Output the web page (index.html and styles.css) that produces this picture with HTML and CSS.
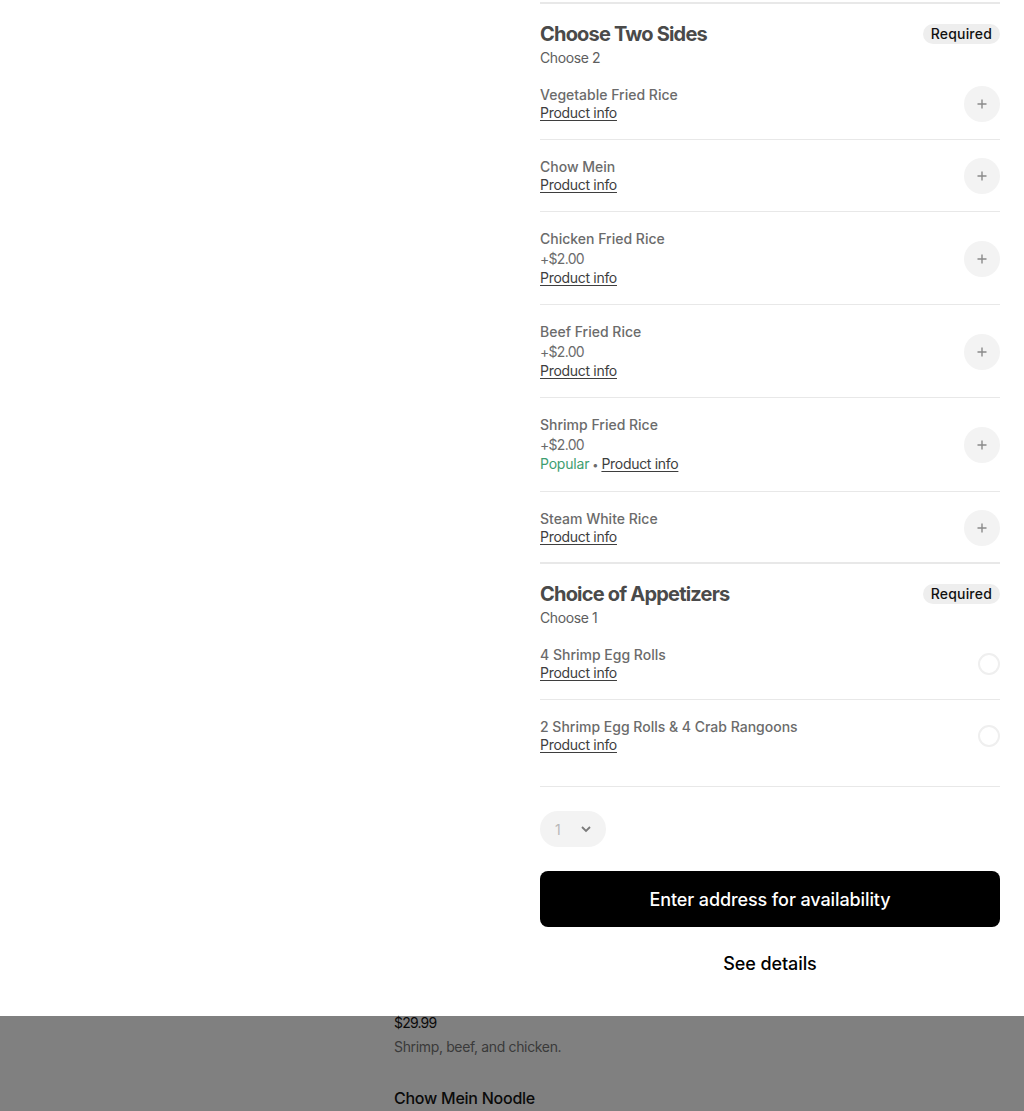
FILE: index.html
```html
<!DOCTYPE html>
<html lang="en">
<head>
<meta charset="utf-8">
<title>Item options</title>
<link rel="stylesheet" href="styles.css">
</head>
<body>
<div class="modal">
  <div class="panel">
    <section class="group first">
      <div class="group-head">
        <div class="group-titles">
          <h2 class="group-title">Choose Two Sides</h2>
          <div class="group-sub">Choose 2</div>
        </div>
        <span class="pill">Required</span>
      </div>
      <ul class="options">
        <li class="option">
          <div class="opt-text">
            <div class="opt-name">Vegetable Fried Rice</div>
            <div class="opt-meta"><a class="info">Product info</a></div>
          </div>
          <button class="add" aria-label="Add"><svg viewBox="0 0 12 12" width="12" height="12"><path d="M6 1.5v9M1.5 6h9" stroke="#8a8a8a" stroke-width="1.4" fill="none"/></svg></button>
        </li>
        <li class="option">
          <div class="opt-text">
            <div class="opt-name">Chow Mein</div>
            <div class="opt-meta"><a class="info">Product info</a></div>
          </div>
          <button class="add" aria-label="Add"><svg viewBox="0 0 12 12" width="12" height="12"><path d="M6 1.5v9M1.5 6h9" stroke="#8a8a8a" stroke-width="1.4" fill="none"/></svg></button>
        </li>
        <li class="option">
          <div class="opt-text">
            <div class="opt-name">Chicken Fried Rice</div>
            <div class="opt-price">+$2.00</div>
            <div class="opt-meta"><a class="info">Product info</a></div>
          </div>
          <button class="add" aria-label="Add"><svg viewBox="0 0 12 12" width="12" height="12"><path d="M6 1.5v9M1.5 6h9" stroke="#8a8a8a" stroke-width="1.4" fill="none"/></svg></button>
        </li>
        <li class="option">
          <div class="opt-text">
            <div class="opt-name">Beef Fried Rice</div>
            <div class="opt-price">+$2.00</div>
            <div class="opt-meta"><a class="info">Product info</a></div>
          </div>
          <button class="add" aria-label="Add"><svg viewBox="0 0 12 12" width="12" height="12"><path d="M6 1.5v9M1.5 6h9" stroke="#8a8a8a" stroke-width="1.4" fill="none"/></svg></button>
        </li>
        <li class="option">
          <div class="opt-text">
            <div class="opt-name">Shrimp Fried Rice</div>
            <div class="opt-price">+$2.00</div>
            <div class="opt-meta"><span class="popular">Popular</span><span class="dot">•</span><a class="info">Product info</a></div>
          </div>
          <button class="add" aria-label="Add"><svg viewBox="0 0 12 12" width="12" height="12"><path d="M6 1.5v9M1.5 6h9" stroke="#8a8a8a" stroke-width="1.4" fill="none"/></svg></button>
        </li>
        <li class="option">
          <div class="opt-text">
            <div class="opt-name">Steam White Rice</div>
            <div class="opt-meta"><a class="info">Product info</a></div>
          </div>
          <button class="add" aria-label="Add"><svg viewBox="0 0 12 12" width="12" height="12"><path d="M6 1.5v9M1.5 6h9" stroke="#8a8a8a" stroke-width="1.4" fill="none"/></svg></button>
        </li>
      </ul>
    </section>

    <section class="group">
      <div class="group-head">
        <div class="group-titles">
          <h2 class="group-title">Choice of Appetizers</h2>
          <div class="group-sub">Choose 1</div>
        </div>
        <span class="pill">Required</span>
      </div>
      <ul class="options radios">
        <li class="option">
          <div class="opt-text">
            <div class="opt-name">4 Shrimp Egg Rolls</div>
            <div class="opt-meta"><a class="info">Product info</a></div>
          </div>
          <span class="radio"></span>
        </li>
        <li class="option">
          <div class="opt-text">
            <div class="opt-name">2 Shrimp Egg Rolls &amp; 4 Crab Rangoons</div>
            <div class="opt-meta"><a class="info">Product info</a></div>
          </div>
          <span class="radio"></span>
        </li>
      </ul>
    </section>

    <div class="footer">
      <div class="qty">
        <span class="qty-num">1</span>
        <svg class="chev" viewBox="0 0 12 12" width="12" height="12"><path d="M2 4l4 4 4-4" stroke="#7a7a7a" stroke-width="1.8" fill="none"/></svg>
      </div>
      <button class="cta">Enter address for availability</button>
      <button class="details">See details</button>
    </div>
  </div>
</div>

<div class="backdrop">
  <div class="behind">
    <div class="b-price">$29.99</div>
    <div class="b-desc">Shrimp, beef, and chicken.</div>
    <div class="b-name">Chow Mein Noodle</div>
  </div>
</div>
</body>
</html>
```

FILE: styles.css
```css
* { box-sizing: border-box; }
html, body { margin: 0; padding: 0; }
body {
  font-family: Inter, "Noto Sans", "Liberation Sans", sans-serif;
  background: #808080;
  color: #000;
}
.modal {
  background: #fff;
  height: 1016px;
  overflow: hidden;
}
.panel {
  width: 460px;
  margin-left: 540px;
}
.group {
  border-top: 2px solid #e8e8e8;
}
.group.first { margin-top: 2px; }
.group-head {
  display: flex;
  justify-content: space-between;
  align-items: flex-start;
  padding-top: 17px;
}
.group-title {
  margin: 0;
  font-size: 20px;
  line-height: 27px;
  font-weight: 700;
  color: #4a4a4a;
  letter-spacing: -0.8px;
}
.group-sub {
  font-size: 14px;
  line-height: 20px;
  color: #5e5e5e;
  letter-spacing: -0.4px;
}
.pill {
  margin-top: 3px;
  background: #eeeeee;
  border-radius: 10px;
  height: 20px;
  line-height: 20px;
  padding: 0 8px;
  font-size: 14px;
  font-weight: 500;
  color: #111;
  letter-spacing: 0.2px;
}
.options {
  list-style: none;
  margin: 0;
  padding: 0;
}
.option {
  display: flex;
  align-items: center;
  justify-content: space-between;
  padding: 18px 0 17px;
  border-bottom: 1px solid #e8e8e8;
}
.option:last-child { border-bottom: none; padding-bottom: 16px; }
.opt-name {
  font-size: 14px;
  line-height: 18px;
  font-weight: 500;
  color: #6b6b6b;
}
.opt-price {
  font-size: 14px;
  line-height: 21px;
  color: #6b6b6b;
  letter-spacing: -0.7px;
}
.opt-meta {
  font-size: 14px;
  line-height: 18px;
  color: #6b6b6b;
}
.info {
  color: #3e3e3e;
  text-decoration: underline;
  text-underline-offset: 2px;
  letter-spacing: -0.3px;
}
.popular { color: #3d9e70; letter-spacing: -0.2px; }
.dot { margin: 0 3px 0 3px; font-size: 11px; color: #6b6b6b; }
.add {
  width: 36px;
  height: 36px;
  border-radius: 50%;
  border: none;
  background: #f3f3f3;
  display: flex;
  align-items: center;
  justify-content: center;
  padding: 0;
}
.radio {
  width: 22px;
  height: 22px;
  border-radius: 50%;
  border: 2px solid #efefef;
}
.radios { border-bottom: 1px solid #e8e8e8; }
.radios .option:last-child { padding-bottom: 32px; }
.footer {
  padding-top: 24px;
  display: flex;
  flex-direction: column;
  align-items: stretch;
}
.qty {
  align-self: flex-start;
  width: 66px;
  height: 36px;
  border-radius: 18px;
  background: #f3f3f3;
  display: flex;
  align-items: center;
  padding: 0 14px 0 15px;
  justify-content: space-between;
}
.qty-num { font-size: 14px; color: #b8b8b8; }
.cta {
  margin-top: 24px;
  height: 56px;
  border: none;
  border-radius: 8px;
  background: #000;
  color: #fff;
  font-family: inherit;
  font-size: 18px;
  font-weight: 500;
  letter-spacing: -0.1px;
}
.details {
  margin-top: 16px;
  height: 40px;
  border: none;
  background: #fff;
  color: #000;
  font-family: inherit;
  font-size: 18px;
  font-weight: 500;
  letter-spacing: -0.1px;
}
.backdrop {
  background: #808080;
  height: 95px;
}
.behind {
  margin-left: 394px;
}
.b-price {
  font-size: 14px;
  line-height: 14px;
  color: #0a0a0a;
  letter-spacing: -0.8px;
}
.b-desc {
  margin-top: 7px;
  font-size: 14px;
  line-height: 20px;
  color: #3a3a3a;
  letter-spacing: -0.35px;
}
.b-name {
  margin-top: 29px;
  font-size: 16px;
  line-height: 24px;
  font-weight: 500;
  color: #0a0a0a;
  letter-spacing: -0.25px;
}
```
